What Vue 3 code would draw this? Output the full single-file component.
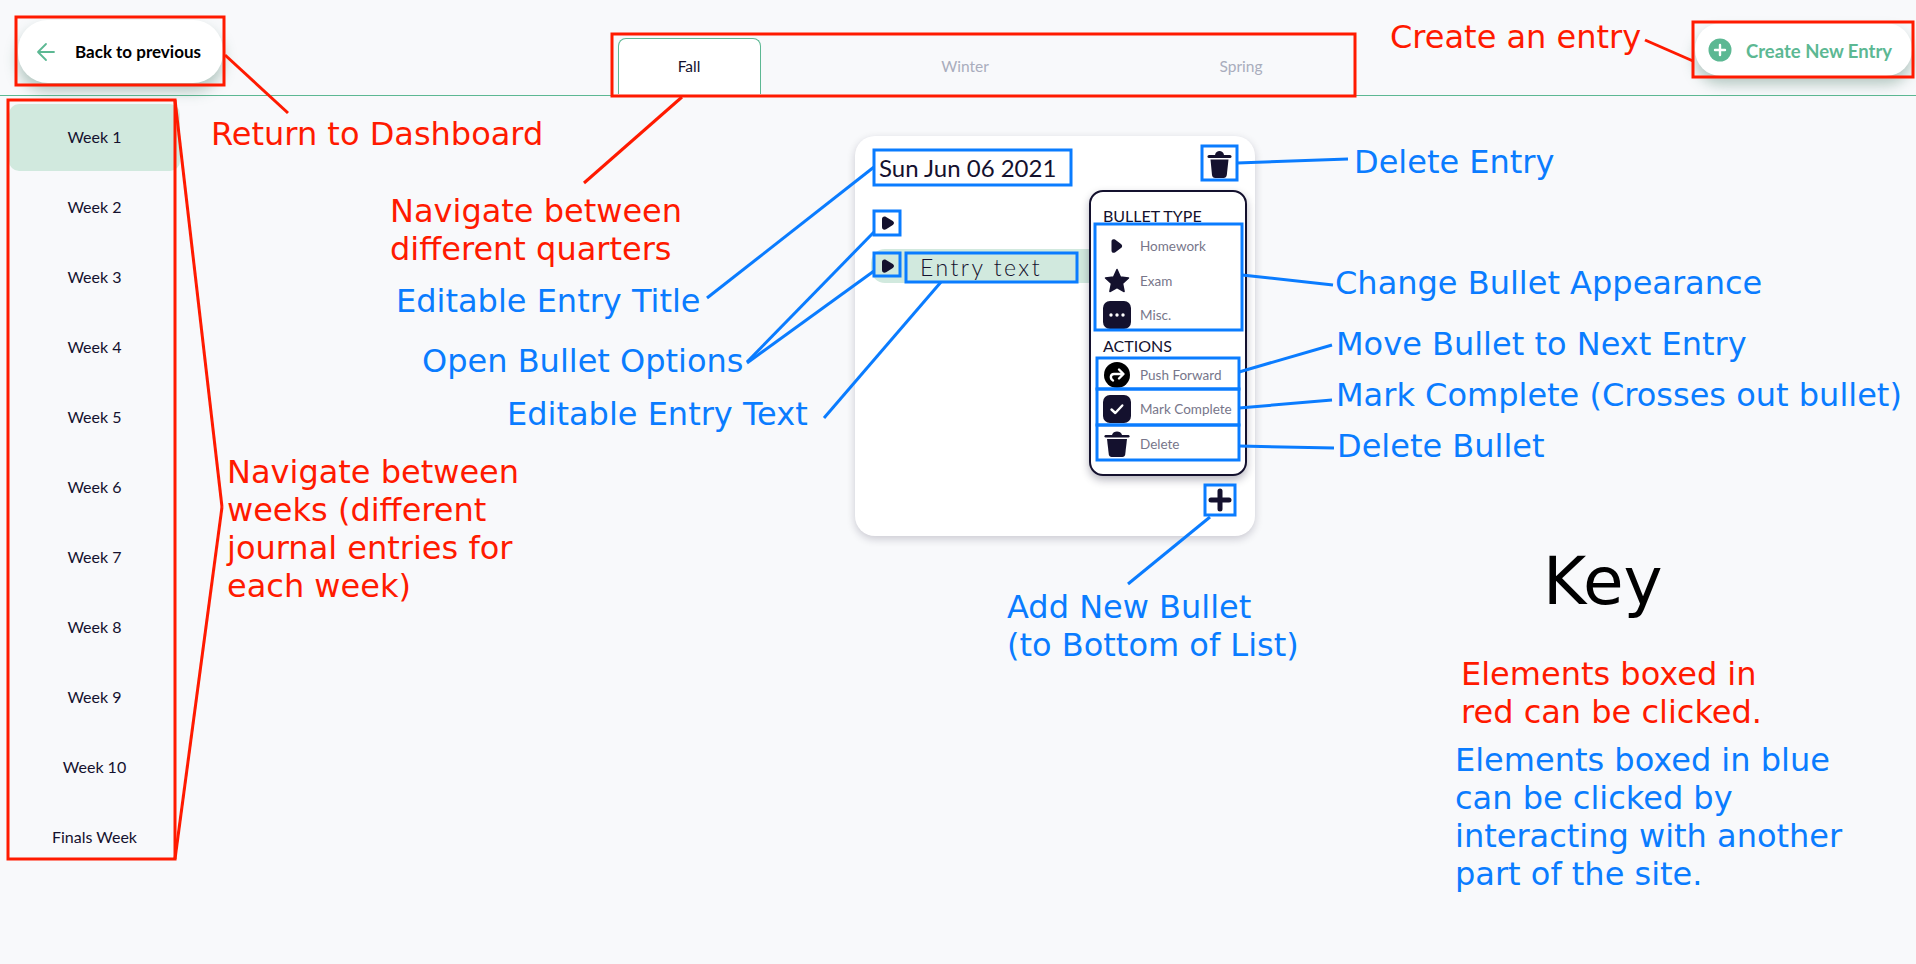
<script setup>
const weeks = ['Week 1', 'Week 2', 'Week 3', 'Week 4', 'Week 5', 'Week 6', 'Week 7', 'Week 8', 'Week 9', 'Week 10', 'Finals Week']
const RED = '#ff1a00'
const BLUE = '#0a7cff'

const boxes = [
  [16, 17, 208, 68, RED], [612, 34, 743, 62, RED], [1693, 22, 220, 55, RED], [8, 100, 167, 759, RED],
  [874, 150, 197, 35, BLUE], [1202, 146, 35, 34, BLUE], [874, 211, 26, 24, BLUE], [874, 253, 26, 23, BLUE],
  [906, 253, 171, 29, BLUE], [1095, 224, 147, 106, BLUE], [1097, 358, 142, 31, BLUE], [1097, 389, 142, 36, BLUE],
  [1097, 425, 142, 35, BLUE], [1205, 485, 30, 30, BLUE],
]
const lines = [
  [225, 55, 288, 113, RED], [682, 97, 584, 183, RED], [1645, 40, 1693, 61, RED],
  [175, 100, 222, 507, RED], [175, 859, 222, 507, RED],
  [874, 167, 707, 298, BLUE], [874, 232, 747, 362, BLUE], [874, 271, 747, 363, BLUE], [941, 282, 824, 418, BLUE],
  [1237, 163, 1348, 159, BLUE], [1242, 275, 1333, 285, BLUE], [1239, 372, 1332, 345, BLUE],
  [1239, 408, 1332, 400, BLUE], [1239, 446, 1334, 448, BLUE], [1210, 517, 1128, 584, BLUE],
]
const notes = [
  { x: 211, y: 134, color: RED, text: 'Return to Dashboard' },
  { x: 390, y: 211, color: RED, text: 'Navigate between\ndifferent quarters' },
  { x: 1390, y: 37, color: RED, text: 'Create an entry' },
  { x: 227, y: 472, color: RED, text: 'Navigate between\nweeks (different\njournal entries for\neach week)' },
  { x: 1461, y: 674, color: RED, text: 'Elements boxed in\nred can be clicked.' },
  { x: 1455, y: 760, color: BLUE, text: 'Elements boxed in blue\ncan be clicked by\ninteracting with another\npart of the site.' },
  { x: 1354, y: 162, color: BLUE, text: 'Delete Entry' },
  { x: 1335, y: 283, color: BLUE, text: 'Change Bullet Appearance' },
  { x: 1336, y: 344, color: BLUE, text: 'Move Bullet to Next Entry' },
  { x: 1336, y: 395, color: BLUE, text: 'Mark Complete (Crosses out bullet)' },
  { x: 1337, y: 446, color: BLUE, text: 'Delete Bullet' },
  { x: 1007, y: 607, color: BLUE, text: 'Add New Bullet\n(to Bottom of List)' },
  { x: 396, y: 301, color: BLUE, text: 'Editable Entry Title' },
  { x: 422, y: 361, color: BLUE, text: 'Open Bullet Options' },
  { x: 507, y: 414, color: BLUE, text: 'Editable Entry Text' },
]
const LINE_H = 38
function noteStyle(n) {
  return { left: n.x + 'px', top: n.y - LINE_H / 2 + 'px', color: n.color }
}
</script>

<template>
  <div class="page">
    <header class="topbar">
      <button class="pill back">
        <svg width="20" height="20" viewBox="0 0 20 20" fill="none" stroke="#5cb893" stroke-width="1.8" stroke-linecap="round" stroke-linejoin="round">
          <path d="M18 10H2M10 2l-8 8 8 8" />
        </svg>
        <span>Back to previous</span>
      </button>
      <div class="tabs">
        <div class="tab active"><span>Fall</span></div>
        <div class="tab"><span>Winter</span></div>
        <div class="tab"><span>Spring</span></div>
      </div>
      <button class="pill create">
        <svg width="24" height="24" viewBox="0 0 24 24">
          <circle cx="12" cy="12" r="11.5" fill="#5cb893" />
          <path d="M12 7v10M7 12h10" stroke="#fff" stroke-width="2.4" stroke-linecap="round" />
        </svg>
        <span>Create New Entry</span>
      </button>
    </header>

    <div class="main">
      <nav class="weeks">
        <div v-for="(w, i) in weeks" :key="w" class="week" :class="{ current: i === 0 }">{{ w }}</div>
      </nav>

      <section class="content">
        <div class="card">
          <div class="title-row">
            <div class="title">Sun Jun 06 2021</div>
            <svg class="trash" width="35" height="34" viewBox="0 0 35 34" fill="#14112e">
              <path d="M13 9c.6-3 2.400-4 4.500-4s3.900 1 4.500 4z" />
              <rect x="5.500" y="9" width="24" height="3" rx="1.500" />
              <path d="M8.500 13.500h18l-1.700 15.500c-.2 2-1.600 3-3.300 3h-8.200c-1.900 0-3-1-3.300-3z" />
            </svg>
          </div>

          <div class="bullets">
            <div class="bullet-row">
              <svg class="bullet" width="26" height="24" viewBox="0 0 26 24">
                <path d="M8 8c0-2.400 2.200-3.200 4.100-2.100l6.700 4.200c1.600 1 1.600 3 0 4l-6.700 4.200C10.200 19.400 8 18.600 8 16z" fill="#14112e" />
              </svg>
            </div>
            <div class="bullet-row selected">
              <svg class="bullet" width="26" height="24" viewBox="0 0 26 24">
                <path d="M8 8c0-2.400 2.200-3.200 4.100-2.100l6.700 4.200c1.600 1 1.600 3 0 4l-6.700 4.200C10.200 19.400 8 18.600 8 16z" fill="#14112e" />
              </svg>
              <span class="entry-text">Entry text</span>
            </div>
          </div>

          <div class="menu">
            <h4>BULLET TYPE</h4>
            <div class="option">
              <svg width="28" height="28" viewBox="0 0 28 28">
                <path d="M8.500 9.500c0-2.200 1.900-2.900 3.500-1.900l6 4.300c1.500 1 1.500 3.200 0 4.200l-6 4.300c-1.600 1-3.500.3-3.500-1.900z" fill="#14112e" />
              </svg>
              <span>Homework</span>
            </div>
            <div class="option">
              <svg width="28" height="28" viewBox="0 0 28 28">
                <path d="M14 2.500l3.400 7.500 8.100 1-6 5.500 1.600 8L14 20.500 6.900 24.500l1.600-8-6-5.500 8.100-1z" fill="#14112e" stroke="#14112e" stroke-width="1.500" stroke-linejoin="round" />
              </svg>
              <span>Exam</span>
            </div>
            <div class="option">
              <svg width="28" height="28" viewBox="0 0 28 28">
                <rect width="28" height="28" rx="7" fill="#14112e" />
                <circle cx="8" cy="14" r="1.700" fill="#fff" /><circle cx="14" cy="14" r="1.700" fill="#fff" /><circle cx="20" cy="14" r="1.700" fill="#fff" />
              </svg>
              <span>Misc.</span>
            </div>
            <h4 class="second">ACTIONS</h4>
            <div class="option">
              <svg width="28" height="28" viewBox="0 0 28 28">
                <circle cx="14" cy="14" r="13" fill="#000" />
                <path d="M10 19.500c-3-1.500-3-6.500 1-6.500h9M16 8.500l4.500 4.500-4.500 4.500" fill="none" stroke="#fff" stroke-width="2.400" stroke-linecap="round" stroke-linejoin="round" />
              </svg>
              <span>Push Forward</span>
            </div>
            <div class="option">
              <svg width="28" height="28" viewBox="0 0 28 28">
                <rect width="28" height="28" rx="7" fill="#14112e" />
                <path d="M8.500 14.500l3.800 3.500 7-7.500" fill="none" stroke="#fff" stroke-width="2.400" stroke-linecap="round" stroke-linejoin="round" />
              </svg>
              <span>Mark Complete</span>
            </div>
            <div class="option">
              <svg width="28" height="28" viewBox="0 0 28 28" fill="#14112e">
                <path d="M9 5c.5-2.500 2.800-3.500 5-3.500s4.500 1 5 3.500z" />
                <rect x="1.500" y="5" width="25" height="2.400" rx="1.200" />
                <path d="M4 9h20l-1.800 15.500c-.2 1.600-1.300 2.500-2.800 2.500H8.600c-1.500 0-2.600-.9-2.800-2.500z" />
              </svg>
              <span>Delete</span>
            </div>
          </div>

          <svg class="plus" width="30" height="30" viewBox="0 0 30 30">
            <path d="M15 6v18M6 15h18" stroke="#14112e" stroke-width="5" stroke-linecap="round" />
          </svg>
        </div>
      </section>
    </div>

    <div class="overlay">
      <svg class="marks" width="1916" height="964" viewBox="0 0 1916 964" fill="none" stroke-width="3">
        <line v-for="(l, i) in lines" :key="'l' + i" :x1="l[0]" :y1="l[1]" :x2="l[2]" :y2="l[3]" :stroke="l[4]" />
        <rect v-for="(b, i) in boxes" :key="'b' + i" :x="b[0]" :y="b[1]" :width="b[2]" :height="b[3]" :stroke="b[4]" />
      </svg>
      <div v-for="n in notes" :key="n.text" class="note" :style="noteStyle(n)">{{ n.text }}</div>
      <div class="key-title">Key</div>
    </div>
  </div>
</template>

<style>
html, body {
  margin: 0;
  background: #f8f9fb;
}
</style>

<style scoped>
.page {
  position: relative;
  width: 1916px;
  height: 964px;
  overflow: hidden;
  background: #f8f9fb;
  font-family: Lato, "Noto Sans", sans-serif;
  color: #14112e;
}
.topbar {
  display: flex;
  height: 95px;
  border-bottom: 1px solid #5cb893;
}
.pill {
  display: flex;
  align-items: center;
  border: 0;
  background: #fff;
  font: inherit;
  box-shadow: 0 8px 14px rgba(70, 120, 100, 0.4);
}
.back {
  width: 205px;
  height: 63px;
  margin: 20px 0 0 18px;
  padding: 0 0 0 18px;
  gap: 19px;
  border-radius: 30px;
  font-size: 17px;
  font-weight: 700;
}
.tabs {
  display: grid;
  grid-template-columns: repeat(3, 276px);
  margin-left: 328px;
  align-self: end;
}
.tab {
  display: flex;
  align-items: center;
  justify-content: center;
  height: 56px;
  width: 143px;
  padding-bottom: 1px;
  justify-self: center;
  font-size: 15.500px;
  color: #a9adbd;
}
.tab.active {
  box-sizing: border-box;
  background: #fff;
  border: 1px solid #5cb893;
  border-bottom: 0;
  border-radius: 8px 8px 0 0;
  color: #14112e;
}
.create {
  width: 217px;
  height: 53px;
  margin: 23px 4px 0 auto;
  padding: 0 0 0 13px;
  gap: 14px;
  border-radius: 26px;
  font-size: 18.500px;
  font-weight: 700;
  color: #5cb893;
}
.create span {
  padding-top: 2px;
}
.main {
  display: flex;
}
.weeks {
  display: flex;
  flex-direction: column;
  gap: 3px;
  width: 171px;
  margin-left: 9px;
  padding-top: 8px;
}
.week {
  display: flex;
  align-items: center;
  justify-content: center;
  box-sizing: border-box;
  height: 67px;
  padding-bottom: 2px;
  font-size: 16px;
  border-radius: 10px;
}
.week.current {
  background: #d1e9de;
}
.content {
  padding: 40px 0 0 675px;
}
.card {
  position: relative;
  display: flex;
  flex-direction: column;
  box-sizing: border-box;
  width: 400px;
  height: 400px;
  background: #fff;
  border-radius: 20px;
  box-shadow: 0 3px 8px rgba(20, 17, 46, 0.2);
}
.title-row {
  display: flex;
  justify-content: space-between;
  padding: 10px 18px 0;
}
.title {
  height: 35px;
  line-height: 35px;
  margin-top: 4px;
  padding-left: 6px;
  font-size: 24px;
}
.bullets {
  display: flex;
  flex-direction: column;
  gap: 9px;
  margin-top: 21px;
}
.bullet-row {
  display: flex;
  align-items: center;
  width: 218px;
  height: 34px;
  margin-left: 16px;
  padding-left: 3px;
  border-radius: 14px 0 0 14px;
}
.bullet-row.selected {
  background: #d1e9de;
}
.entry-text {
  margin-left: 20px;
  padding-top: 1px;
  font-size: 23px;
  font-weight: 300;
  letter-spacing: 2.5px;
  color: #14112e;
}
.menu {
  position: absolute;
  left: 234px;
  top: 54px;
  box-sizing: border-box;
  width: 158px;
  height: 286px;
  padding: 14px 0 0 12px;
  background: #fff;
  border: 2px solid #14112e;
  border-radius: 14px;
  box-shadow: 0 4px 8px rgba(20, 17, 46, 0.3);
}
.menu h4 {
  margin: 0 0 3px;
  height: 20px;
  line-height: 20px;
  font-size: 16px;
  font-weight: 400;
}
.menu h4.second {
  margin-top: 3px;
  margin-bottom: 2px;
}
.option {
  display: flex;
  align-items: center;
  gap: 9px;
  height: 34.500px;
  font-size: 13.500px;
  color: #77768a;
}
.plus {
  align-self: flex-end;
  margin: auto 20px 21px 0;
}
.overlay {
  position: absolute;
  inset: 0;
  pointer-events: none;
}
.marks {
  position: absolute;
  left: 0;
  top: 0;
}
.note {
  position: absolute;
  font-family: "DejaVu Sans", sans-serif;
  font-size: 32px;
  line-height: 38px;
  white-space: pre;
}
.key-title {
  position: absolute;
  left: 1543px;
  top: 546px;
  font-family: "DejaVu Sans", sans-serif;
  font-size: 66px;
  line-height: 72px;
  color: #000;
}
</style>
